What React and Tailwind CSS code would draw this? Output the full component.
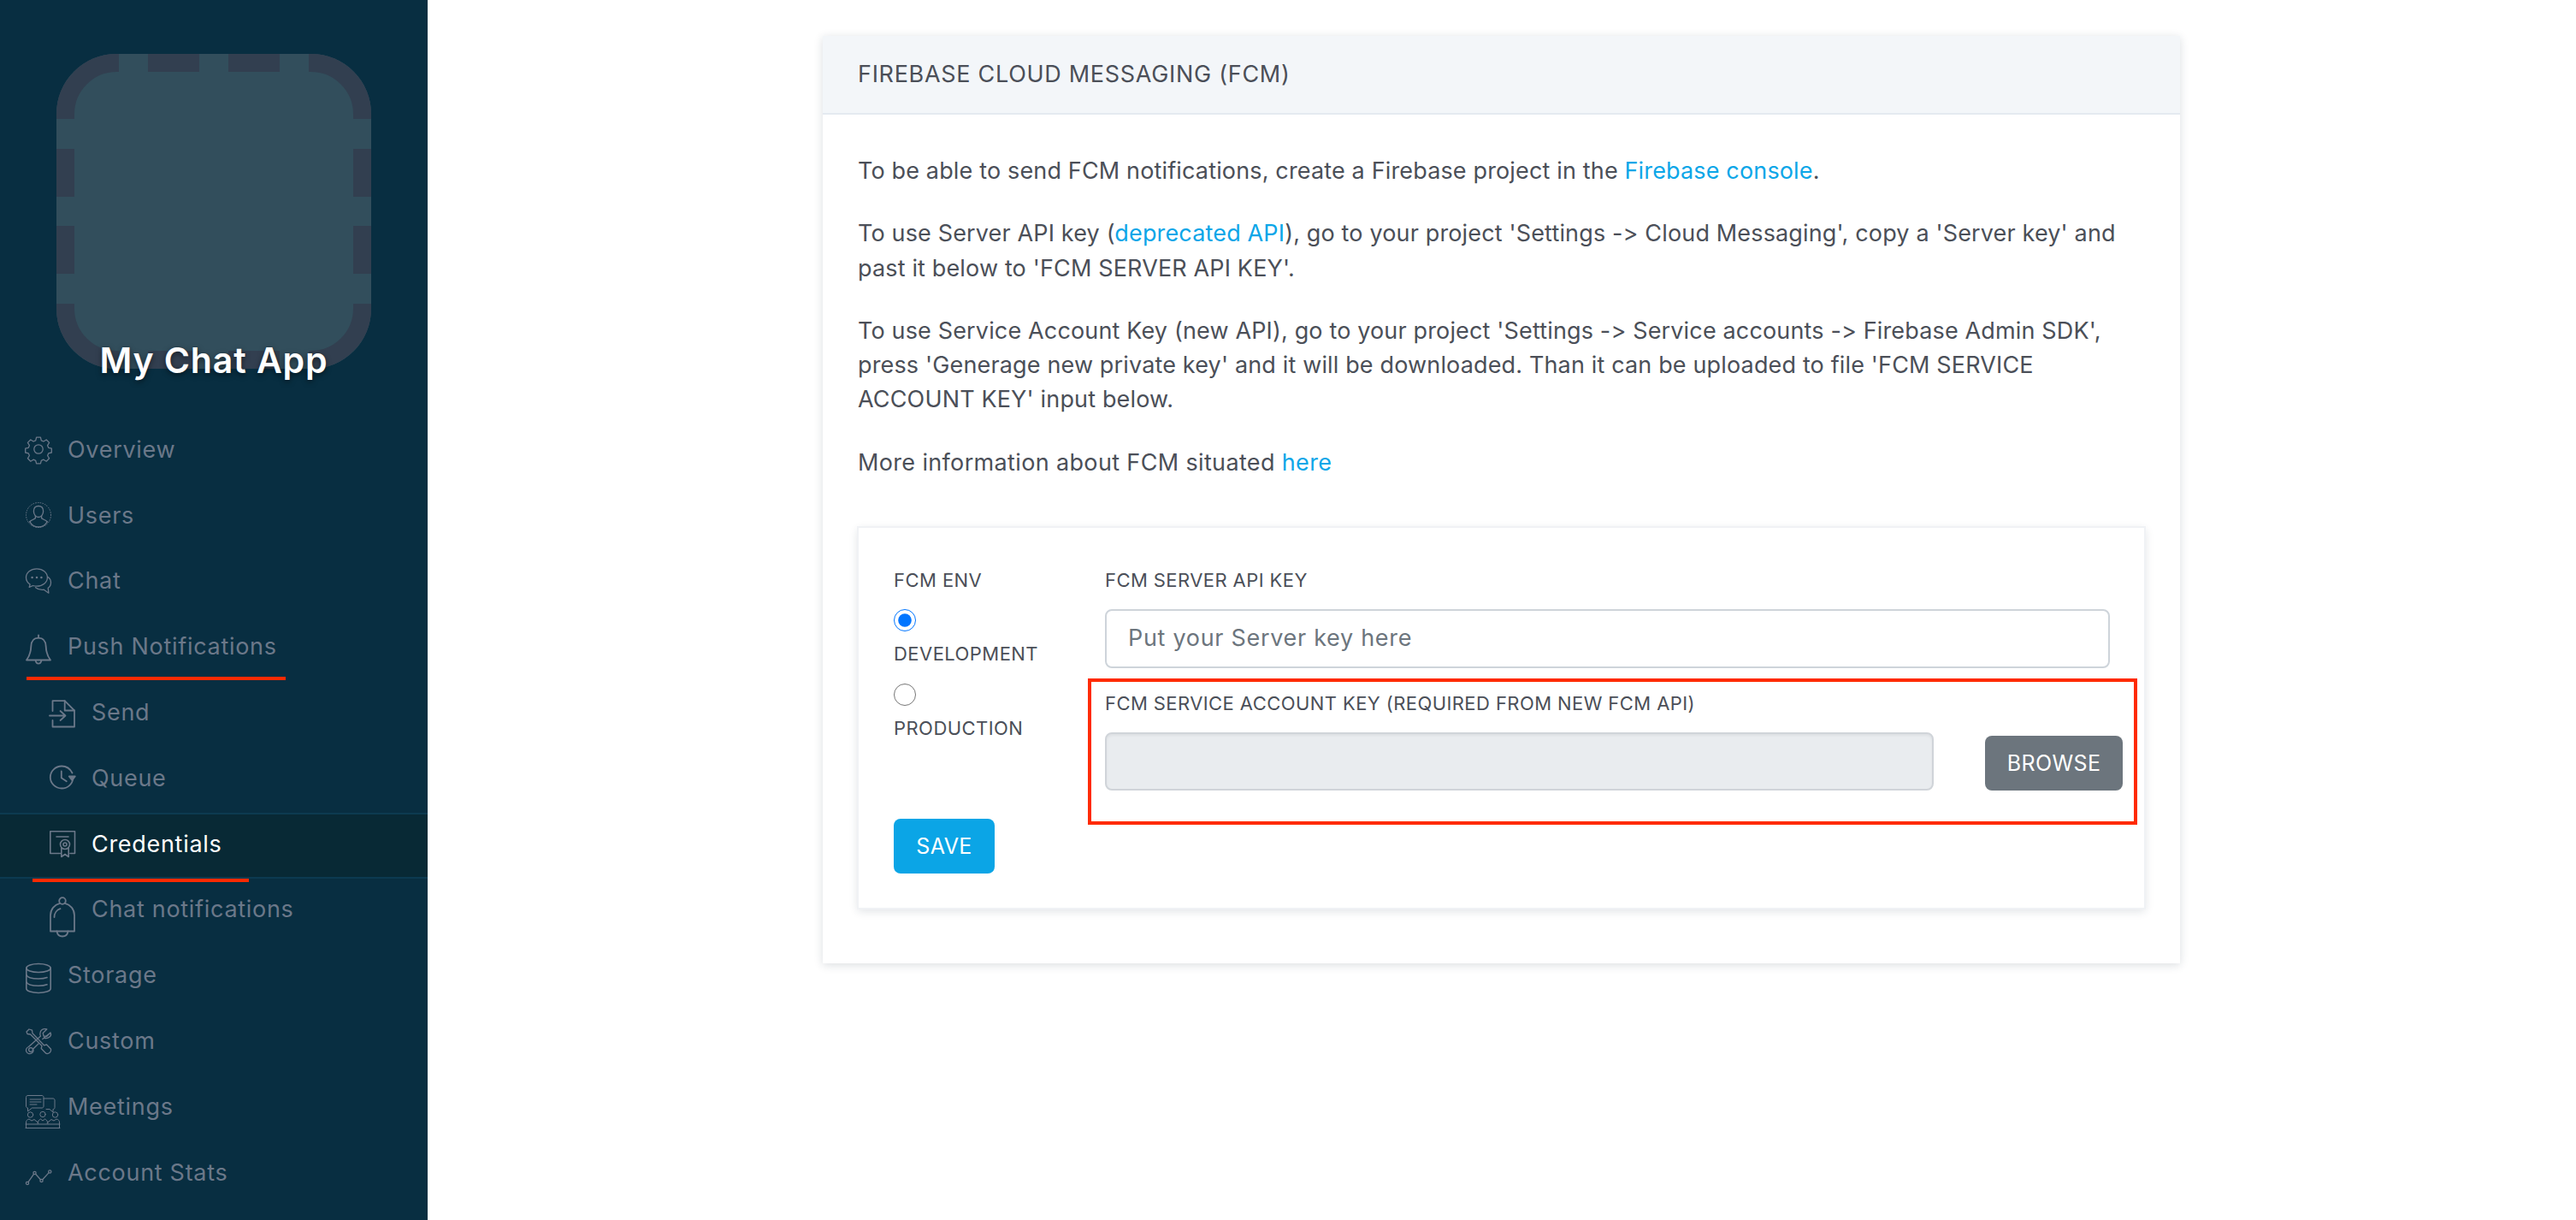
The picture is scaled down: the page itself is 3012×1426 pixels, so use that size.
import React from "react";

const S = ({ children }) => (
  <svg width="30" height="30" viewBox="0 0 30 30" fill="none" stroke="#6b7889" strokeWidth="1.3" strokeLinecap="round" strokeLinejoin="round" className="block overflow-visible shrink-0">
    {children}
  </svg>
);

const icons = {
  gear: (
    <S>
      <circle cx="15" cy="15" r="5.2" />
      <path d="M12.6 1.2h4.8l.9 3.7 2.6 1.1 3.3-2 3.4 3.4-2 3.3 1.1 2.6 3.6.9v4.8l-3.6.9-1.1 2.6 2 3.3-3.4 3.4-3.3-2-2.6 1.1-.9 3.6h-4.8l-.9-3.6-2.6-1.1-3.3 2-3.4-3.4 2-3.3-1.1-2.6-3.6-.9v-4.8l3.6-.9 1.1-2.6-2-3.3 3.4-3.4 3.3 2 2.6-1.1z" />
    </S>
  ),
  user: (
    <S>
      <circle cx="15" cy="15" r="14.5" strokeDasharray="0.8 2" strokeWidth="1" />
      <path d="M15 4.5c-3.6 0-5.6 2.5-5.6 6 0 3.6 2.3 7 5.6 7s5.6-3.4 5.6-7c0-3.5-2-6-5.6-6z" />
      <path d="M11.4 16.5v2.3c-1.6 1.3-4.6 2-6.6 3.9M18.6 16.5v2.3c1.6 1.3 4.6 2 6.6 3.9" />
      <path d="M4.8 22.7c2.4 4.2 6 6.3 10.2 6.3s7.8-2.1 10.2-6.3" />
    </S>
  ),
  chat: (
    <S>
      <path d="M13 .8C6 .8.5 5 .5 11c0 3.4 1.9 6.2 4.6 8l-.9 3.4 4.3-1.9c1.4.4 3 .7 4.5.7 7 0 12.4-4.4 12.4-10.2C25.4 5 20 .8 13 .8z" />
      <path d="M26.3 10.5c2.2 1.7 3.2 4 3.2 6.4 0 2.6-1.2 4.9-3.3 6.4l.7 5.9-5.6-4c-.7.1-1.4.2-2.1.2-3 0-5.7-.9-7.6-2.6" />
      <circle cx="7.6" cy="11" r=".6" />
      <circle cx="13" cy="11" r=".6" />
      <circle cx="18.4" cy="11" r=".6" />
    </S>
  ),
  bell: (
    <S>
      <g strokeWidth="1.8">
        <path d="M15 4.6c-6 0-8.500 4.400-8.700 10-.2 5.500-1.500 11-5.300 15.900h28c-3.800-4.900-5.100-10.400-5.300-15.900-.2-5.600-2.700-10-8.700-10z" />
        <path d="M15 4.400V1.500" />
        <path d="M11.600 30.800c.4 2.400 1.800 3.800 3.400 3.800s3-1.400 3.400-3.800" />
      </g>
    </S>
  ),
  send: (
    <S>
      <g strokeWidth="1.8">
        <path d="M3.500 13V1.200h14.200L29 12.500V31.500H3.500V24" />
        <path d="M17.700 1.200v11.300H29" />
        <path d="M0 18.500h18M12.500 13l6 5.500-6 5.500" />
      </g>
    </S>
  ),
  queue: (
    <S>
      <g strokeWidth="1.8">
        <path d="M26.500 9.500C24 4.500 19.500 1.500 14.200 1.500 6.800 1.500.8 7.500.8 14.500s6 13 13.400 13c7 0 12.600-5.200 13.300-12" />
        <path d="M13.800 7.500v7.700l6 4" />
        <path d="M22.800 13.500h7l-3.500 4.500z" fill="#6b7889" />
      </g>
    </S>
  ),
  cert: (
    <S>
      <g strokeWidth="1.6">
        <path d="M12.500 26.500H.8V.8h28.700v25.700H24" />
        <path d="M8 7h14" />
        <circle cx="18" cy="16" r="5.500" />
        <circle cx="18" cy="16" r="2" />
        <path d="M13.800 20v10.500l4.200-3 4.200 3V20" />
      </g>
    </S>
  ),
  bell2: (
    <S>
      <g strokeWidth="1.8">
        <circle cx="15" cy="5" r="3.800" />
        <path d="M12 7.800C5.500 9.500 1 15 1 22v18.500h28V22c0-7-4.500-12.500-11-14.200" />
        <path d="M5.500 24c0-4.500 2.800-8.500 7-9.800" />
        <path d="M8.500 40.500c.5 3.500 3 6 6.500 6s6-2.500 6.500-6" />
      </g>
    </S>
  ),
  db: (
    <S>
      <g strokeWidth="1.6">
        <ellipse cx="15" cy="6.500" rx="14.200" ry="5" />
        <path d="M.8 6.500v24c0 2.800 6.300 5 14.200 5s14.200-2.200 14.200-5v-24" />
        <path d="M.8 14.500c1 2.600 6.800 4.500 14.200 4.500 4 0 7.500-.5 10-1.500M.8 22.800c1 2.600 6.800 4.500 14.200 4.500 4 0 7.500-.5 10-1.500" />
      </g>
    </S>
  ),
  tools: (
    <S>
      <path d="M1 4 4 1l3.500 1.200L8 5.800l13.500 14 3-.8 5 5.300c.4 1.500-.6 4-2.300 4.700-1.500.8-3.300.5-4.200-.5l-4.800-5 .8-3L5.500 7 2 6.500z" />
      <path d="M29 5l-4.500 4.500-3.500-.5-.8-3.500L24.800 1c-3.200-.8-6.300.2-7.500 3-.7 1.800-.6 3.500.2 5L3.500 21.500c-2.800 1-3.700 4-2.500 6 1.200 2.300 4.300 2.800 6.300 1.300 1.700-1.200 2-3 1.500-4.800L15 18m4.800-5.500 1.700-1.400c1.800.7 3.500.6 5-.2 2.700-1.300 3.600-3.600 2.500-5.900z" />
      <circle cx="6" cy="25" r="2.400" />
    </S>
  ),
  meet: (
    <S>
      <g strokeWidth="1">
        <path d="M3 2.500h16c1.200 0 2 .8 2 2v10.500c0 1.200-.8 2-2 2H7.500L2.500 21v-4c-1.200 0-2-.8-2-2V4.500c0-1.200.8-2 2-2z" />
        <path d="M5 7h13M5 10h13M5 13h8" />
        <path d="M21 6h11c1.300 0 2 .8 2 2v8.500c0 1.200-.7 2-2 2v3.500l-4-3.500h-4" />
        <circle cx="5.500" cy="25" r="3.200" />
        <circle cx="20" cy="24.500" r="3.200" />
        <circle cx="34.500" cy="25" r="3.200" />
        <path d="M.5 40v-6c0-2.500 1.500-3.500 3.500-4l3 2 3-1.500 5 4" />
        <path d="M39.500 40v-6c0-2.500-1.500-3.500-3.500-4l-3 2-3-1.500-5 4" />
        <path d="M14 35.500c0-3 2-5 3.500-5.500l2.500 2 2.500-2c1.500.5 3.500 2.500 3.500 5.500" />
        <path d="M0 40.500h40M0 36h40" />
      </g>
    </S>
  ),
  stats: (
    <S>
      <circle cx="2" cy="28" r="1.600" />
      <circle cx="10.500" cy="16" r="1.600" />
      <circle cx="18.500" cy="25" r="1.600" />
      <circle cx="28.300" cy="14.500" r="1.600" />
      <path d="M3 26.700 9.500 17.300M11.600 17.200l5.800 6.600M19.700 23.800l7.500-8.200" />
    </S>
  ),
};

const nav = [
  ["Overview", "gear", 0],
  ["Users", "user", 0],
  ["Chat", "chat", 0],
  ["Push Notifications", "bell", 0],
  ["Send", "send", 1],
  ["Queue", "queue", 1],
  ["Credentials", "cert", 1, true],
  ["Chat notifications", "bell2", 1],
  ["Storage", "db", 0],
  ["Custom", "tools", 0],
  ["Meetings", "meet", 0],
  ["Account Stats", "stats", 0],
];

function Row({ label, icon, sub, active }) {
  return (
    <div
      className={
        "flex h-[76.8px] items-center gap-[19px] pb-[4px] " +
        (sub ? "pl-[58px] " : "pl-[30px] ") +
        (active ? "bg-[#082935] border-y-2 border-[#0c3a50] text-white" : "text-[#6b7889]")
      }
    >
      {icons[icon]}
      <span className="text-[27px] tracking-[0.7px] leading-none">{label}</span>
    </div>
  );
}

const A = ({ children }) => <a className="text-[#0ca6e8]">{children}</a>;

const Logo = () => (
  <svg width="368" height="368" viewBox="0 0 368 368" className="block shrink-0">
    <rect width="368" height="368" rx="70" fill="#324e5c" />
    <path
      fill="none"
      stroke="#323f50"
      strokeWidth="21"
      d="M73 10.500H70.500A60 60 0 0 0 10.500 70.500V76
         M107 10.500H167M201 10.500H261
         M295 10.500H297.500A60 60 0 0 1 357.500 70.500V76
         M357.500 111V167M357.500 201V257
         M357.500 292V297.500A60 60 0 0 1 297.500 357.500H295
         M261 357.500H201M167 357.500H107
         M73 357.500H70.500A60 60 0 0 1 10.500 297.500V292
         M10.500 257V201M10.500 167V111"
    />
  </svg>
);

export default function App() {
  return (
    <div className="relative flex h-[1426px] w-[3012px] overflow-hidden bg-white font-['Inter',sans-serif]">
      <aside className="w-[500px] shrink-0 bg-[#082e41]">
        <div className="flex h-[489px] flex-col items-center pt-[63px]">
          <Logo />
          <div className="-mt-[40px] text-[41px] font-semibold leading-[60px] tracking-[0.9px] text-white [text-shadow:0_2px_6px_rgba(0,0,0,0.55)]">
            My Chat App
          </div>
        </div>
        {nav.map(([label, icon, sub, active]) => (
          <Row key={label} label={label} icon={icon} sub={sub} active={active} />
        ))}
      </aside>

      <main className="flex-1">
        <section className="ml-[462px] mt-[42px] h-[1084px] w-[1587px] bg-white shadow-[0_2px_10px_rgba(30,50,70,0.16)]">
          <header className="flex h-[92px] items-center border-b-2 border-[#e4eaf0] bg-[#f3f6f9] px-[41px] text-[27px] tracking-[0.7px] text-[#4b4f58]">
            FIREBASE CLOUD MESSAGING (FCM)
          </header>
          <div className="px-[41px] pt-[46px] text-[27px] leading-[40.3px] tracking-[0.15px] text-[#4b4f58]">
            <p className="mb-[33px]">
              To be able to send FCM notifications, create a Firebase project in the <A>Firebase console</A>.
            </p>
            <p className="mb-[33px]">
              To use Server API key (<A>deprecated API</A>), go to your project 'Settings -&gt; Cloud Messaging', copy a 'Server key' and past it below to 'FCM SERVER API KEY'.
            </p>
            <p className="mb-[33px]">
              To use Service Account Key (new API), go to your project 'Settings -&gt; Service accounts -&gt; Firebase Admin SDK', press 'Generage new private key' and it will be downloaded. Than it can be uploaded to file 'FCM SERVICE ACCOUNT KEY' input below.
            </p>
            <p className="tracking-[0.35px]">
              More information about FCM situated <A>here</A>
            </p>

            <div className="mt-[55px] flex h-[446px] bg-white pl-[42px] pr-[40px] pt-[47px] shadow-[0_3px_10px_rgba(30,50,70,0.14)] outline-2 outline-[#f0f2f5] -outline-offset-1">
              <div className="flex w-[247px] shrink-0 flex-col text-[22px] leading-[30px] tracking-[0.45px]">
                <div>FCM ENV</div>
                <input type="radio" name="env" defaultChecked className="mt-[19px] h-[26px] w-[26px] accent-[#0075ff] m-0" />
                <div className="mt-[11px]">DEVELOPMENT</div>
                <input type="radio" name="env" className="mt-[20px] h-[26px] w-[26px] m-0" />
                <div className="mt-[11px]">PRODUCTION</div>
                <button className="mt-[91px] h-[64px] w-[118px] rounded-[8px] bg-[#0ba5e6] text-[25px] tracking-[0.4px] text-white">SAVE</button>
              </div>
              <div className="relative w-[1175px] shrink-0 text-[22px] leading-[30px] tracking-[0.42px]">
                <div>FCM SERVER API KEY</div>
                <input placeholder="Put your Server key here" readOnly className="mt-[19px] block h-[69px] w-full rounded-[8px] border-2 border-[#ced4da] bg-white px-[25px] pb-[3px] text-[27px] tracking-[0.7px] placeholder:text-[#6c757d] outline-none" />
                <div className="mt-[26px]">FCM SERVICE ACCOUNT KEY (REQUIRED FROM NEW FCM API)</div>
                <div className="mt-[19px] flex w-[1190px] items-end gap-[60px]">
                  <div className="h-[68px] w-[969px] rounded-[8px] border-2 border-[#d0d4d9] bg-[#e9ecef] shadow-[inset_0_2px_3px_rgba(0,0,0,0.05)]" />
                  <button className="h-[64px] w-[161px] rounded-[8px] bg-[#6c757d] text-[25px] tracking-[0.4px] text-white">BROWSE</button>
                </div>
                <div className="absolute left-[-20px] top-[130px] h-[171px] w-[1227px] border-4 border-[#ff2a00]" />
              </div>
            </div>
          </div>
        </section>
      </main>

      <div className="absolute left-[31px] top-[791px] h-[4px] w-[303px] bg-[#ff2a00]" />
      <div className="absolute left-[38px] top-[1027px] h-[4px] w-[253px] bg-[#ff2a00]" />
    </div>
  );
}
